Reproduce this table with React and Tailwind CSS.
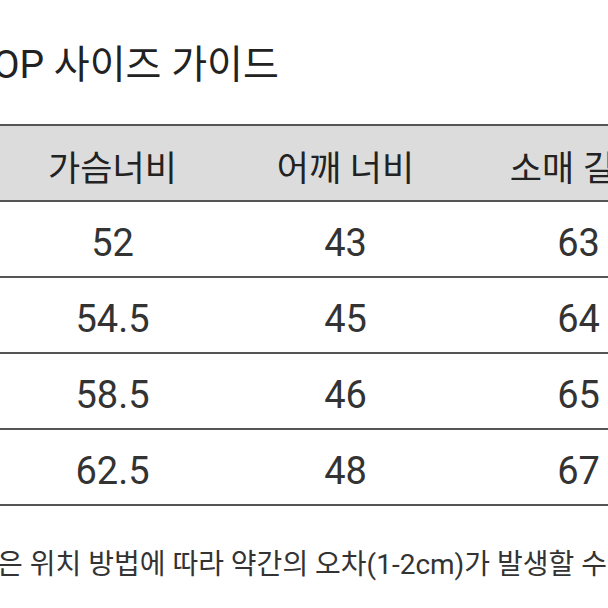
import React from "react";

const rows = [
  { size: "S", chest: "52", shoulder: "43", sleeve: "63", length: "68" },
  { size: "M", chest: "54.5", shoulder: "45", sleeve: "64", length: "70" },
  { size: "L", chest: "58.5", shoulder: "46", sleeve: "65", length: "72" },
  { size: "XL", chest: "62.5", shoulder: "48", sleeve: "67", length: "74" },
];

const SizeGuide = () => {
  return (
    <div
      className="w-[608px] h-[608px] overflow-hidden bg-white text-[#2a2a2a]"
      style={{ fontFamily: 'Roboto, "Noto Sans CJK KR", sans-serif' }}
    >
      {/* title */}
      <h1 className="pt-[46px] -ml-[30px] text-[39px] leading-[39px] font-normal whitespace-nowrap text-[#222]">
        TOP 사이즈 가이드
      </h1>

      {/* table */}
      <div className="mt-[39px] -ml-[237px] w-[1165px] border-t-2 border-[#555]">
        <div className="grid grid-cols-[233px_233px_233px_233px_233px] h-[76px] pt-[14px] bg-[#dcdcdc] border-b-2 border-[#555] text-[35px] text-[#222]">
          <div className="flex items-center justify-center">사이즈</div>
          <div className="flex items-center justify-center">가슴너비</div>
          <div className="flex items-center justify-center">어깨 너비</div>
          <div className="flex items-center justify-center">소매 길이</div>
          <div className="flex items-center justify-center">총장</div>
        </div>
        {rows.map((r) => (
          <div
            key={r.size}
            className="grid grid-cols-[233px_233px_233px_233px_233px] h-[76px] pt-[8px] border-b-2 border-[#555] text-[38px] text-[#333]"
          >
            <div className="flex items-center justify-center">{r.size}</div>
            <div className="flex items-center justify-center">{r.chest}</div>
            <div className="flex items-center justify-center">{r.shoulder}</div>
            <div className="flex items-center justify-center">{r.sleeve}</div>
            <div className="flex items-center justify-center">{r.length}</div>
          </div>
        ))}
      </div>

      {/* note */}
      <p className="mt-[45px] -ml-[3px] text-[28px] leading-[28px] whitespace-nowrap text-[#333]">
        은 위치 방법에 따라 약간의 오차(1-2cm)가 발생할 수 있습니다.
      </p>
    </div>
  );
};

export default SizeGuide;
